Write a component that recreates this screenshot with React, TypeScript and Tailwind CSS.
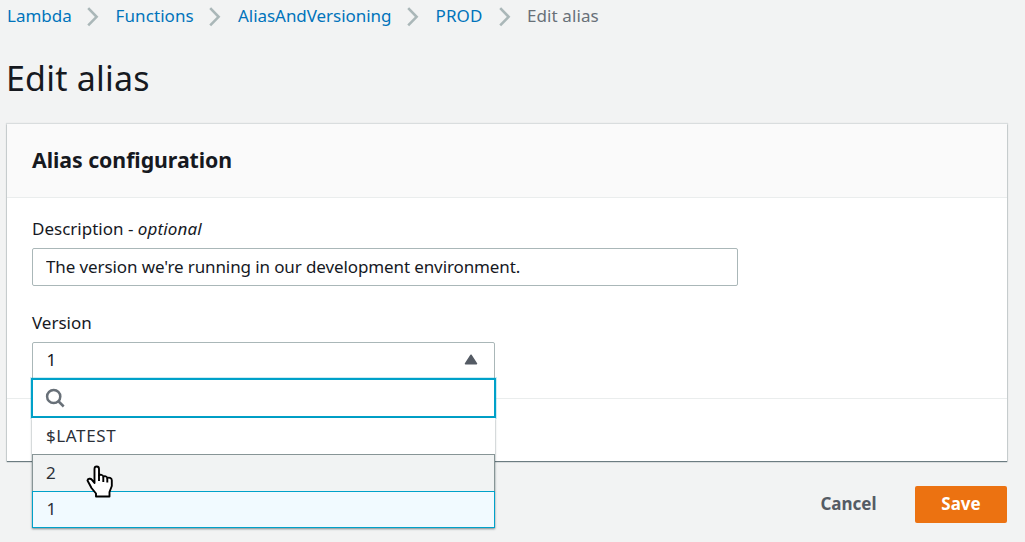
import { useState } from "react";

const crumbs = [
  { label: "Lambda", box: "w-[108.5px] pr-[16.5px]" },
  { label: "Functions", box: "w-[122.5px] pr-[17px] tracking-[0.1px]" },
  { label: "AliasAndVersioning", box: "w-[197.5px] pr-[17px] tracking-[-0.05px]" },
  { label: "PROD", box: "w-[91.5px] pr-4 tracking-[0.1px]" },
];

function Chevron() {
  return (
    <svg width="12" height="20" viewBox="0 0 12 20" fill="none" stroke="#aab7b8" strokeWidth="2.6" className="mt-[3px] shrink-0">
      <path d="M1.2 1.2 9.6 9.8 1.2 18.4" />
    </svg>
  );
}

function HandCursor() {
  return (
    <svg width="28" height="34" viewBox="0 0 28 34" className="pointer-events-none absolute top-[87px] left-[54px] z-20" fill="#fff" stroke="#000" strokeWidth="1.9" strokeLinejoin="round">
      <path d="M10 31.5v-3L5.5 23l-4-7.5c.3-2 3-2.500 4.500-.7L8.500 18V4c0-3.300 4.500-3.300 4.500 0v6.500c1-1.200 4-.8 4.300 1.200 1.200-1 3.800-.5 4 1.300 1.500-.8 4.500 0 4.500 2.300V21l-2.300 6v4.500Z" />
      <path d="M13 10v6M17.300 11.700V17M21.300 13v4.500" fill="none" />
    </svg>
  );
}

function VersionSelect() {
  const [version, setVersion] = useState("1");
  return (
    <div className="relative w-[463px]">
      <button className="flex h-[38px] w-full items-center justify-between rounded-t-[2px] border border-[#aab7b8] bg-white pr-4 pb-0.5 pl-[13.5px]">
        {version}
        <svg width="14" height="11" viewBox="0 0 14 11" fill="#545b64" stroke="#545b64" strokeWidth="1.5" strokeLinejoin="round" className="-mt-0.5">
          <path d="M7 1.2 12.500 9.700H1.500Z" />
        </svg>
      </button>
      <div className="absolute top-9 -left-px z-10 w-[465px] text-[#16191f]">
        <div className="flex h-10 items-center border-2 border-[#00a1c9] bg-white pl-3 shadow-[0_0_0_1px_rgba(0,161,201,0.2)]">
          <svg width="20" height="20" viewBox="0 0 20 20" fill="none" stroke="#687078" strokeWidth="2.500">
            <circle cx="8.700" cy="8.500" r="6.600" />
            <path d="m13.200 13 5.500 5.500" />
          </svg>
        </div>
        <div className="mx-px shadow-[0_1px_2px_rgba(0,28,36,0.5)]">
          <div className="flex h-9 items-center bg-white pl-3.5 tracking-[0.6px] text-[#2b3038]">$LATEST</div>
          <div className="flex h-[37px] items-center border border-b-0 border-[#879596] bg-[#f1f3f3] pl-[13px] text-[#2b3038]">2</div>
          <div onClick={() => setVersion("1")} className="flex h-[37px] items-center border border-[#00a1c9] bg-[#f1faff] pl-[13.5px] pb-0.5 text-[#2b3038]">1</div>
        </div>
      </div>
      <div className="absolute top-9 left-0 z-20"><HandCursor /></div>
    </div>
  );
}

export default function App() {
  return (
    <main className="h-[542px] w-[1025px] overflow-hidden bg-[#f2f3f3] font-['Noto_Sans',sans-serif] text-[17px] leading-[24px] text-[#16191f]">
      <nav className="flex h-8 items-start pt-1 pl-[7px] text-[#0073bb]">
        {crumbs.map((c) => (
          <div key={c.label} className={`flex shrink-0 justify-between ${c.box}`}>
            <a>{c.label}</a>
            <Chevron />
          </div>
        ))}
        <span className="tracking-[0.1px] text-[#687078]">Edit alias</span>
      </nav>
      <h1 className="h-[92px] pt-[22px] pl-[6px] text-[34px] leading-[48px] tracking-[0.2px]">Edit alias</h1>
      <section className="ml-[7px] h-[337px] w-[1000px] bg-white shadow-[0_1px_1px_0_rgba(0,28,36,0.5),0_0_1px_1px_rgba(0,28,36,0.1)]">
        <header className="h-[74px] border-b border-[#eaeded] bg-[#fafafa] pt-[21px] pl-[25px]">
          <h2 className="text-[21.300px] leading-[30px] font-bold tracking-[-0.05px]">Alias configuration</h2>
        </header>
        <div className="h-[201px] border-b border-[#eaeded] pl-[25px] pt-[19px]">
          <label className="block h-[31px]">Description - <i className="tracking-[0.15px]">optional</i></label>
          <input
            defaultValue="The version we're running in our development environment."
            className="block h-[38px] w-[706px] rounded-[2px] border border-[#aab7b8] bg-white px-[13px] pb-0.5 tracking-[-0.110px] outline-none"
          />
          <label className="mt-[25px] block h-[31px]">Version</label>
          <VersionSelect />
        </div>
      </section>
      <footer className="mt-[25px] mr-[18px] flex justify-end font-bold">
        <button className="h-[37px] w-[133px] pb-px text-[#545b64]">Cancel</button>
        <button className="h-[37px] w-[92px] rounded-[2px] bg-[#ec7211] pb-px text-white">Save</button>
      </footer>
    </main>
  );
}
